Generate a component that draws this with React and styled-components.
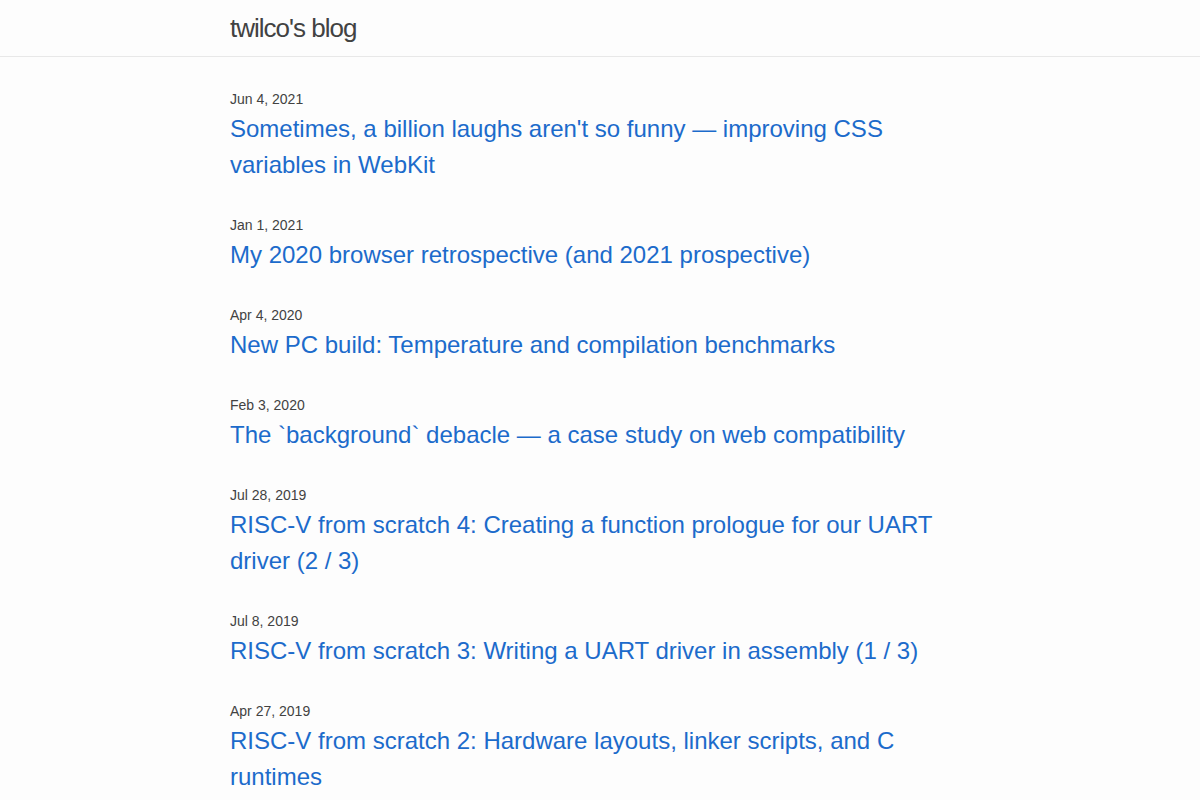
import React from "react";
import styled, { createGlobalStyle } from "styled-components";

const GlobalStyle = createGlobalStyle`
  html, body {
    margin: 0;
    padding: 0;
    background: #fdfdfd;
    color: #111;
    font-family: "Liberation Sans", Arial, sans-serif;
    font-size: 16px;
  }
  * { box-sizing: border-box; }
`;

const SiteHeader = styled.header`
  height: 57px;
  border-bottom: 1px solid #e8e8e8;
`;

const Wrapper = styled.div`
  max-width: 800px;
  margin: 0 auto;
  padding: 0 30px;
`;

const SiteTitle = styled.a`
  display: inline-block;
  font-size: 26px;
  line-height: 56px;
  letter-spacing: -1px;
  color: #424242;
  text-decoration: none;
`;

const PageContent = styled.main`
  padding-top: 30px;
`;

const PostList = styled.ul`
  list-style: none;
  margin: 0;
  padding: 0;
`;

const PostItem = styled.li`
  margin-bottom: 30px;
`;

const PostMeta = styled.span`
  display: block;
  font-size: 14px;
  line-height: 24px;
  color: #424242;
`;

const PostTitle = styled.h3`
  margin: 0;
  font-size: 24px;
  font-weight: normal;
  line-height: 36px;
`;

const PostLink = styled.a`
  color: #1c6bcb;
  text-decoration: none;
`;

const posts = [
  { date: "Jun 4, 2021", title: "Sometimes, a billion laughs aren't so funny — improving CSS variables in WebKit" },
  { date: "Jan 1, 2021", title: "My 2020 browser retrospective (and 2021 prospective)" },
  { date: "Apr 4, 2020", title: "New PC build: Temperature and compilation benchmarks" },
  { date: "Feb 3, 2020", title: "The `background` debacle — a case study on web compatibility" },
  { date: "Jul 28, 2019", title: "RISC-V from scratch 4: Creating a function prologue for our UART driver (2 / 3)" },
  { date: "Jul 8, 2019", title: "RISC-V from scratch 3: Writing a UART driver in assembly (1 / 3)" },
  { date: "Apr 27, 2019", title: "RISC-V from scratch 2: Hardware layouts, linker scripts, and C runtimes" },
];

const App = () => {
  return (
    <>
      <GlobalStyle />
      <SiteHeader>
        <Wrapper>
          <SiteTitle href="#">twilco's blog</SiteTitle>
        </Wrapper>
      </SiteHeader>
      <PageContent>
        <Wrapper>
          <PostList>
            {posts.map((post) => (
              <PostItem key={post.title}>
                <PostMeta>{post.date}</PostMeta>
                <PostTitle>
                  <PostLink href="#">{post.title}</PostLink>
                </PostTitle>
              </PostItem>
            ))}
          </PostList>
        </Wrapper>
      </PageContent>
    </>
  );
};

export default App;
